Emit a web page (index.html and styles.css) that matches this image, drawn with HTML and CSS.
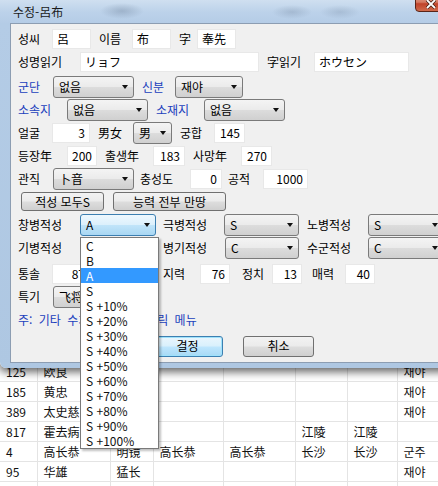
FILE: index.html
```html
<!DOCTYPE html>
<html lang="ko">
<head>
<meta charset="UTF-8">
<meta name="viewport" content="width=device-width, initial-scale=1.0">
<title>수정-呂布</title>
<link rel="stylesheet" href="styles.css">
</head>
<body>

<div class="sheet">
    <table>
        <colgroup>
            <col class="c-id"><col class="c-name"><col class="c-a"><col class="c-b">
            <col class="c-c"><col class="c-d"><col class="c-e"><col class="c-f">
        </colgroup>
        <tr><td>125</td><td>欧良</td><td></td><td></td><td></td><td></td><td></td><td>재야</td></tr>
        <tr><td>185</td><td>黄忠</td><td></td><td></td><td></td><td></td><td></td><td>재야</td></tr>
        <tr><td>389</td><td>太史慈</td><td></td><td></td><td></td><td></td><td></td><td>재야</td></tr>
        <tr><td>817</td><td>霍去病</td><td></td><td></td><td></td><td>江陵</td><td>江陵</td><td></td></tr>
        <tr><td>4</td><td>高长恭</td><td>明镜</td><td>高长恭</td><td>高长恭</td><td>长沙</td><td>长沙</td><td>군주</td></tr>
        <tr><td>95</td><td>华雄</td><td>猛长</td><td></td><td></td><td></td><td></td><td>재야</td></tr>
        <tr><td>124</td><td>魏延</td><td>贼将</td><td></td><td></td><td></td><td></td><td>재야</td></tr>
    </table>
</div>

<div class="window">
    <div class="titlebar">
        <span class="title">수정-呂布</span>
        <div class="close">
            <svg width="12" height="10" viewBox="0 0 12 10"><path d="M2 1 L10 9 M10 1 L2 9" stroke="#3a1a12" stroke-width="3.2"/><path d="M2 1 L10 9 M10 1 L2 9" stroke="#fff" stroke-width="1.8"/></svg>
        </div>
    </div>

    <div class="client">
        <div class="row">
            <span class="lbl w34">성씨</span><input class="i39" value="呂">
            <span class="lbl w33">이름</span><input class="i39" value="布">
            <span class="lbl w18">字</span><input class="i39" value="奉先">
        </div>
        <div class="row">
            <span class="lbl w62">성명읽기</span><input class="i179" value="リョフ">
            <span class="lbl w47">字읽기</span><input class="i95" value="ホウセン">
        </div>
        <div class="row r3">
            <span class="lbl blue w35">군단</span><div class="combo c81">없음<i class="arrow"></i></div>
            <span class="lbl blue w33">신분</span><div class="combo c68">재야<i class="arrow"></i></div>
        </div>
        <div class="row">
            <span class="lbl blue w49">소속지</span><div class="combo c81">없음<i class="arrow"></i></div>
            <span class="lbl blue w48">소재지</span><div class="combo c81">없음<i class="arrow"></i></div>
        </div>
        <div class="row">
            <span class="lbl w34">얼굴</span><input class="i38 num" value="3">
            <span class="lbl w35">男女</span><div class="combo c39">男<i class="arrow"></i></div>
            <span class="lbl w34">궁합</span><input class="i31 num" value="145">
        </div>
        <div class="row">
            <span class="lbl w49">등장年</span><input class="i30 num" value="200">
            <span class="lbl w48">출생年</span><input class="i32 num" value="183">
            <span class="lbl w48">사망年</span><input class="i31 num" value="270">
        </div>
        <div class="row">
            <span class="lbl w35">관직</span><div class="combo c81 mr6">卜音<i class="arrow"></i></div>
            <span class="lbl w50">충성도</span><input class="i32 num mr6" value="0">
            <span class="lbl w35">공적</span><input class="i45 num" value="1000">
        </div>
        <div class="row r8">
            <button class="btn b83">적성 모두S</button>
            <button class="btn b113">능력 전부 만땅</button>
        </div>
        <div class="row r9">
            <span class="lbl w62">창병적성</span>
            <div class="combo c76 focus mr7">A<i class="arrow"></i>
                <ul class="droplist">
                    <li>C</li>
                    <li>B</li>
                    <li class="sel">A</li>
                    <li>S</li>
                    <li>S +10%</li>
                    <li>S +20%</li>
                    <li>S +30%</li>
                    <li>S +40%</li>
                    <li>S +50%</li>
                    <li>S +60%</li>
                    <li>S +70%</li>
                    <li>S +80%</li>
                    <li>S +90%</li>
                    <li>S +100%</li>
                </ul>
            </div>
            <span class="lbl w61">극병적성</span><div class="combo c75">S<i class="arrow"></i></div>
            <span class="lbl w61">노병적성</span><div class="combo c76">S<i class="arrow"></i></div>
        </div>
        <div class="row">
            <span class="lbl w62">기병적성</span><div class="combo c76 mr7">B<i class="arrow"></i></div>
            <span class="lbl w62">병기적성</span><div class="combo c74">C<i class="arrow"></i></div>
            <span class="lbl w61">수군적성</span><div class="combo c76">C<i class="arrow"></i></div>
        </div>
        <div class="row r11">
            <span class="lbl w34">통솔</span><input class="i38 num" value="87">
            <span class="lbl w28">무력</span><input class="i29 num" value="100">
            <span class="lbl w37">지력</span><input class="i30 num mr12" value="76">
            <span class="lbl w30">정치</span><input class="i30 num mr10" value="13">
            <span class="lbl w33">매력</span><input class="i30 num" value="40">
        </div>
        <div class="row">
            <span class="lbl w35">특기</span><div class="combo c81">飞将<i class="arrow"></i></div>
        </div>
        <div class="row">
            <span class="note">주: 기타 수치는 오른쪽 클릭 메뉴</span>
        </div>
        <div class="row r14">
            <button class="btn b71 default">결정</button>
            <button class="btn b71">취소</button>
        </div>
    </div>
</div>

</body>
</html>
```

FILE: styles.css
```css
body {
    margin: 0;
    width: 438px;
    height: 486px;
    overflow: hidden;
    position: relative;
    background: #fff;
    font-family: "Noto Sans CJK KR", "Noto Sans CJK SC", sans-serif;
    font-size: 12px;
    color: #000;
}

/* grid behind the dialog */
.sheet {
    padding-top: 362px;
}

.sheet table {
    border-collapse: collapse;
    table-layout: fixed;
    width: 500px;
}

.sheet td {
    height: 18px;
    padding: 0 0 0 6px;
    border-right: 1px solid #e4e4e4;
    border-bottom: 1px solid #e4e4e4;
    line-height: 19px;
    white-space: nowrap;
    overflow: hidden;
    color: #111;
}

.c-id { width: 37px; }
.c-name { width: 73px; }
.c-a { width: 43px; }
.c-b { width: 70px; }
.c-c { width: 72px; }
.c-d { width: 52px; }
.c-e { width: 50px; }
.c-f { width: 103px; }

/* the window */
.window {
    position: absolute;
    left: 0;
    top: 0;
    width: 480px;
    height: 368px;
    border-radius: 0 0 6px 6px;
    background:
        radial-gradient(ellipse 22px 8px at 122px 11px, rgba(120,140,165,.45), transparent),
        radial-gradient(ellipse 20px 7px at 292px 12px, rgba(120,140,165,.35), transparent),
        radial-gradient(ellipse 20px 7px at 340px 12px, rgba(120,140,165,.3), transparent),
        linear-gradient(180deg, #cfdff0 0, #bcd2ea 12px, #b4cce6 24px, #aec7e2 100%);
    box-shadow: 0 3px 9px 1px rgba(0,0,0,.6);
}

.titlebar {
    position: relative;
    height: 23px;
}

.title {
    display: block;
    padding-left: 13px;
    line-height: 24px;
    color: #1a1a1a;
}

.close {
    position: absolute;
    left: 415px;
    top: -6px;
    width: 43px;
    height: 18px;
    border: 1px solid #5a2418;
    border-radius: 0 0 4px 4px;
    background: linear-gradient(180deg, #e8a593 0, #d47a62 45%, #c0432a 55%, #cf6a4c 100%);
    display: flex;
    align-items: flex-end;
    justify-content: center;
    padding-bottom: 2px;
    box-sizing: border-box;
}

.close svg {
    margin-right: 12px;
}

.client {
    margin-left: 10px;
    height: 340px;
    box-sizing: border-box;
    padding: 3px 0 0 7px;
    background: #f0f0f0;
    border-top: 1px solid #8c9db2;
    border-left: 1px solid #8c9db2;
    border-bottom: 1px solid #8c9db2;
}

.row {
    display: flex;
    align-items: center;
    height: 23px;
}

.r3 { margin-top: 2px; }
.r11 { margin-top: 3px; }
.r14 { margin-top: 3px; height: 24px; padding-left: 134px; }
.r8 { padding-left: 3px; }

.lbl {
    flex: none;
    white-space: nowrap;
}

.blue, .note {
    color: #2140bd;
}

.note {
    white-space: nowrap;
    word-spacing: 3px;
}

.w18 { width: 18px; }
.w28 { width: 28px; }
.w30 { width: 30px; }
.w33 { width: 33px; }
.w34 { width: 34px; }
.w35 { width: 35px; }
.w37 { width: 37px; }
.w47 { width: 47px; }
.w48 { width: 48px; }
.w49 { width: 49px; }
.w50 { width: 50px; }
.w61 { width: 61px; }
.w62 { width: 62px; }

input {
    flex: none;
    height: 20px;
    box-sizing: border-box;
    margin: 0 8px 0 0;
    padding: 0 4px;
    border: 1px solid #e8e8e8;
    background: #fff;
    font: inherit;
    color: #000;
    outline: none;
}

input.num { text-align: right; }

.i29 { width: 29px; }
.i30 { width: 30px; }
.i31 { width: 31px; }
.i32 { width: 32px; }
.i38 { width: 38px; }
.i39 { width: 39px; }
.i45 { width: 45px; }
.i95 { width: 95px; }
.i179 { width: 179px; }

.combo {
    flex: none;
    position: relative;
    height: 22px;
    box-sizing: border-box;
    margin-right: 8px;
    padding-left: 5px;
    line-height: 20px;
    border: 1px solid #7a7a7a;
    border-radius: 3px;
    background: linear-gradient(180deg, #f4f4f4 0, #ebebeb 48%, #dcdcdc 52%, #d0d0d0 100%);
    white-space: nowrap;
}

.combo.focus {
    border-color: #3c7fb1;
    background: linear-gradient(180deg, #eef8fe 0, #dcf0fc 48%, #c0e4f9 52%, #a9d7f3 100%);
}

.arrow {
    position: absolute;
    right: 5px;
    top: 8px;
    width: 0;
    height: 0;
    border-left: 3.5px solid transparent;
    border-right: 3.5px solid transparent;
    border-top: 4px solid #111;
}

.c39 { width: 39px; }
.c68 { width: 68px; }
.c74 { width: 74px; }
.c75 { width: 75px; }
.c76 { width: 76px; }
.c81 { width: 81px; }

.mr6 { margin-right: 6px; }
.mr7 { margin-right: 7px; }
.mr10 { margin-right: 10px; }
.mr12 { margin-right: 12px; }

.droplist {
    position: absolute;
    left: -1px;
    top: 22px;
    z-index: 10;
    width: 77px;
    margin: 0;
    padding: 0;
    list-style: none;
    background: #fff;
    border: 1px solid #7a7a7a;
    box-shadow: 2px 2px 2px rgba(0,0,0,.25);
    line-height: 15px;
}

.droplist li {
    height: 15px;
    padding-left: 5px;
    color: #111;
}

.droplist li.sel {
    background: #3399ff;
    color: #fff;
}

.btn {
    flex: none;
    height: 19px;
    margin: 0 9px 0 0;
    padding: 0;
    border: 1px solid #707070;
    border-radius: 3px;
    background: linear-gradient(180deg, #f2f2f2 0, #ebebeb 48%, #dddddd 52%, #cfcfcf 100%);
    font: inherit;
    color: #000;
    line-height: 16px;
}

.b71 { width: 71px; height: 21px; margin-right: 20px; }
.b83 { width: 83px; }
.b113 { width: 113px; }

.btn.default {
    border-color: #3c7fb1;
    box-shadow: inset 0 0 0 1px #9fe2fb;
    background: linear-gradient(180deg, #eaf6fd 0, #d9f0fc 48%, #bee6fd 52%, #a7d9f5 100%);
}
```
